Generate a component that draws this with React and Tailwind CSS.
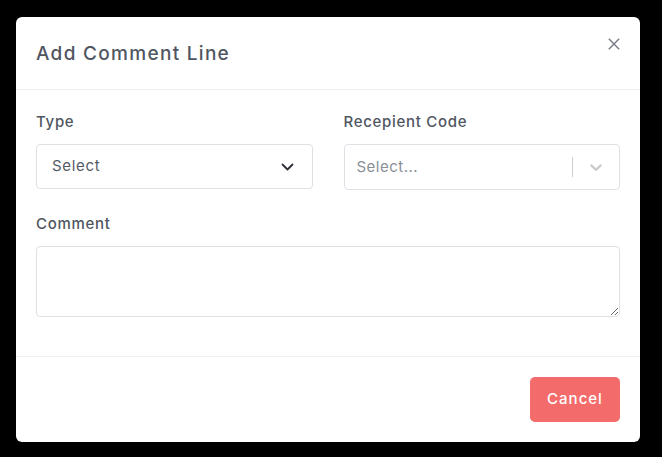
import React from "react";

export default function App() {
  const font = { fontFamily: "Inter, 'Noto Sans', sans-serif" };
  return (
    <div className="w-[662px] h-[457px] bg-black pt-[17px] pl-[16px]" style={font}>
      <div className="w-[624px] h-[425px] bg-white rounded-[6px] flex flex-col">
        <div className="h-[73px] shrink-0 border-b border-[#eef0f3] pl-5 pr-[18px] flex items-center justify-between">
          <h2 className="mt-[3px] text-[19px] text-[#50565f] font-medium tracking-[1.3px]">Add Comment Line</h2>
          <button className="self-start mt-[19px] w-[16px] h-[16px] flex items-center justify-center text-[#7a7f87]" aria-label="Close">
            <svg width="12" height="12" viewBox="0 0 12 12" fill="none" stroke="currentColor" strokeWidth="1.5">
              <path d="M0.8 0.8L11.2 11.2M11.2 0.8L0.8 11.2" />
            </svg>
          </button>
        </div>
        <div className="px-5 pt-5 pb-[39px]">
          <div className="grid grid-cols-2 gap-x-[31px]">
            <div className="flex flex-col">
              <label className="text-[15px] leading-6 text-[#50565f] font-medium tracking-[0.7px]">Type</label>
              <div className="mt-[10px] h-[45px] border border-[#dde1e6] rounded-[4px] pl-[15px] pr-[18px] flex items-center justify-between">
                <span className="text-[15px] text-[#555b65] tracking-[0.7px]">Select</span>
                <svg width="13" height="8" viewBox="0 0 13 8" fill="none" stroke="#2b2f36" strokeWidth="1.8" strokeLinecap="round" strokeLinejoin="round">
                  <path d="M1.5 1.5L6.5 6.5L11.5 1.5" />
                </svg>
              </div>
            </div>
            <div className="flex flex-col">
              <label className="text-[15px] leading-6 text-[#50565f] font-medium tracking-[0.7px]">Recepient Code</label>
              <div className="mt-[10px] h-[46px] border border-[#dde1e6] rounded-[4px] pl-3 flex items-center">
                <span className="flex-1 text-[15px] text-[#8a8f96] tracking-[0.5px]">Select...</span>
                <span className="w-px h-[20px] bg-[#cccccc]" />
                <span className="w-[46px] flex items-center justify-center">
                  <svg width="20" height="20" viewBox="0 0 20 20" fill="#cccccc">
                    <path d="M4.516 7.548c0.436-0.446 1.043-0.481 1.576 0l3.908 3.747 3.908-3.747c0.533-0.481 1.141-0.446 1.574 0 0.436 0.445 0.408 1.197 0 1.615-0.406 0.418-4.695 4.502-4.695 4.502-0.217 0.223-0.502 0.335-0.787 0.335s-0.57-0.112-0.789-0.335c0 0-4.287-4.084-4.695-4.502s-0.436-1.17 0-1.615z" />
                  </svg>
                </span>
              </div>
            </div>
          </div>
          <label className="block mt-[22px] text-[15px] leading-6 text-[#50565f] font-medium tracking-[0.7px]">Comment</label>
          <textarea className="mt-[10px] block w-full h-[71px] border border-[#dde1e6] rounded-[4px] resize-y outline-none" />
        </div>
        <div className="flex-1 border-t border-[#eef0f3] px-5 flex items-start justify-end pt-5">
          <button className="w-[90px] h-[45px] rounded-[5px] bg-[#f36b6b] text-white text-[15px] font-medium tracking-[1px]">Cancel</button>
        </div>
      </div>
    </div>
  );
}
